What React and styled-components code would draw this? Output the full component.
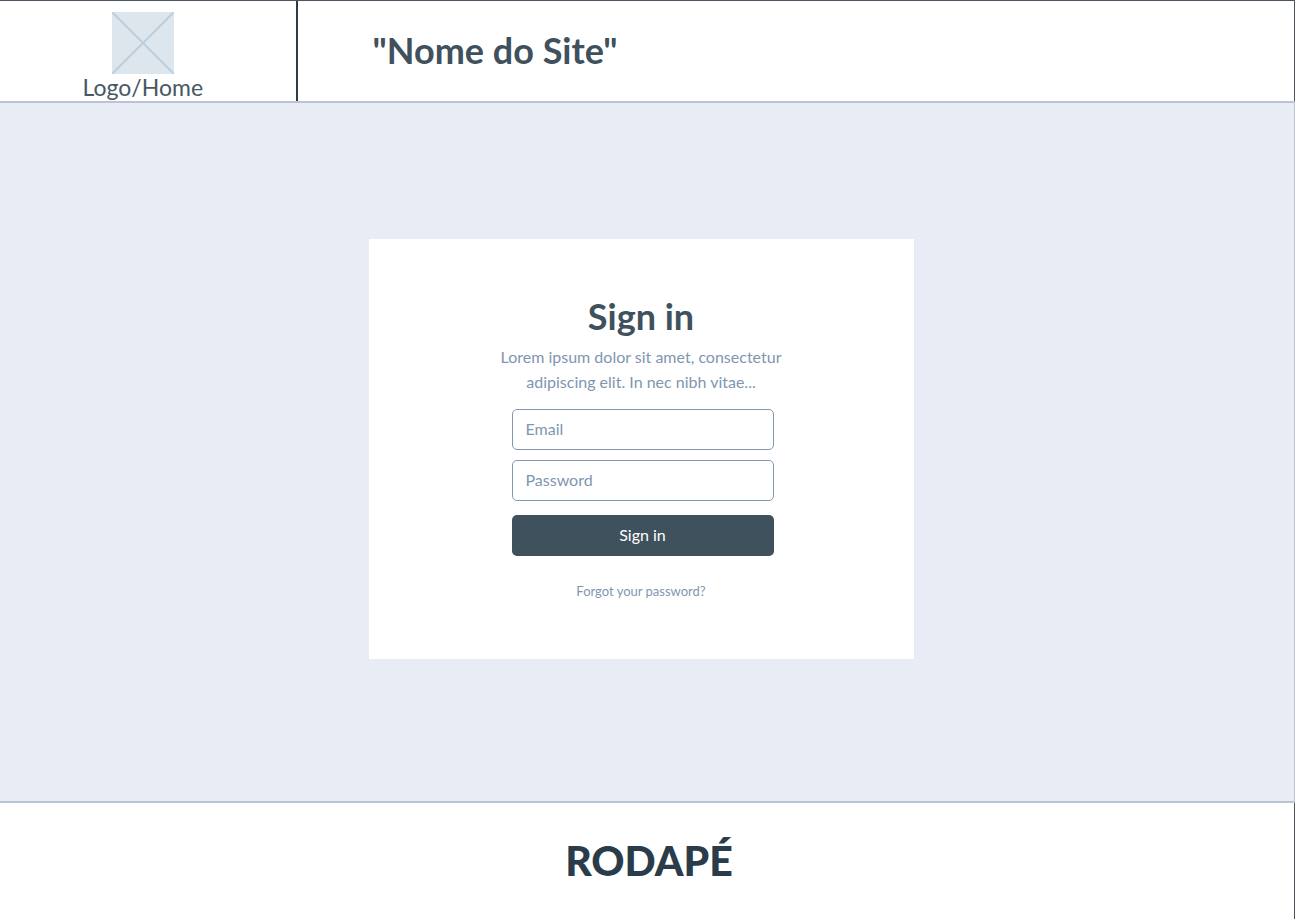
import React from 'react';
import styled, { createGlobalStyle } from 'styled-components';

const GlobalStyle = createGlobalStyle`
  *, *::before, *::after { box-sizing: border-box; }
  body {
    margin: 0;
    background: #fff;
    color: #3f515d;
    font-family: Lato, "Liberation Sans", sans-serif;
  }
  h1, h2, p { margin: 0; }
`;

const Page = styled.div`
  display: flex;
  flex-direction: column;
  min-height: 100vh;
`;

const Header = styled.header`
  display: flex;
  min-height: 101px;
  border-top: 1px solid #485561;
  border-right: 1px solid #485561;
`;

const HomeLink = styled.a`
  display: flex;
  flex-direction: column;
  align-items: center;
  width: 23%;
  padding: 11px 10px 0 0;
  border-right: 2px solid #2c3d4b;
  color: #485864;
  font-size: 23px;
  line-height: 27px;
  text-decoration: none;
`;

const LogoMark = styled.svg`
  width: 62px;
  height: 62px;
`;

const SiteName = styled.h1`
  flex: 1;
  padding: 26px 0 0 75px;
  font-size: 36px;
  font-weight: 700;
  line-height: 46px;
`;

const Main = styled.main`
  flex: 1;
  display: flex;
  align-items: center;
  justify-content: center;
  padding: 24px 12px 30px 0;
  background: #e7ecf5;
  border: solid #bcc3d2;
  border-width: 2px 1px 2px 0;
`;

const Card = styled.section`
  width: 545px;
  max-width: 100%;
  padding: 54px 24px 58px;
  background: #fff;
  text-align: center;
`;

const Title = styled.h2`
  font-size: 36px;
  font-weight: 700;
  line-height: 46px;
`;

const Intro = styled.p`
  width: 300px;
  margin: 5px auto 0;
  color: #7f96b0;
  font-size: 16px;
  line-height: 25px;
`;

const Form = styled.form`
  display: flex;
  flex-direction: column;
  width: 265px;
  margin: 15px auto 0;
  padding-left: 3px;
`;

const Field = styled.input`
  height: 41px;
  margin-bottom: ${(p) => (p.$last ? 14 : 10)}px;
  padding: 0 13px 2px;
  border: 1px solid #8199b3;
  border-radius: 5px;
  background: #fff;
  color: #3f515d;
  font: inherit;
  font-size: 16px;
  &::placeholder { color: #7f96b0; opacity: 1; }
`;

const Submit = styled.button`
  height: 41px;
  padding: 0 0 2px;
  border: 0;
  border-radius: 5px;
  background: #3f515d;
  color: #fff;
  font: inherit;
  font-size: 16px;
  cursor: pointer;
`;

const Forgot = styled.a`
  display: inline-block;
  margin-top: 25px;
  color: #7f96b0;
  font-size: 13px;
  line-height: 20px;
  text-decoration: none;
`;

const Footer = styled.footer`
  display: flex;
  align-items: center;
  justify-content: center;
  min-height: 116px;
  padding-left: 4px;
  border-right: 1px solid #485561;
  color: #2a3c4a;
  font-size: 41px;
  font-weight: 900;
  line-height: 50px;
`;

export default function App() {
  return (
    <>
      <GlobalStyle />
      <Page>
        <Header>
          <HomeLink href="#home">
            <LogoMark viewBox="0 0 62 62" aria-hidden="true">
              <rect width="62" height="62" fill="#dde6ed" />
              <path d="M0.5 0.5 61.5 61.5M61.5 0.5 0.5 61.5" stroke="#bccddc" strokeWidth="2" />
            </LogoMark>
            Logo/Home
          </HomeLink>
          <SiteName>"Nome do Site"</SiteName>
        </Header>
        <Main>
          <Card>
            <Title>Sign in</Title>
            <Intro>Lorem ipsum dolor sit amet, consectetur adipiscing elit. In nec nibh vitae...</Intro>
            <Form onSubmit={(e) => e.preventDefault()}>
              <Field type="email" placeholder="Email" aria-label="Email" />
              <Field type="password" placeholder="Password" aria-label="Password" $last />
              <Submit type="submit">Sign in</Submit>
            </Form>
            <Forgot href="#forgot">Forgot your password?</Forgot>
          </Card>
        </Main>
        <Footer>RODAPÉ</Footer>
      </Page>
    </>
  );
}
